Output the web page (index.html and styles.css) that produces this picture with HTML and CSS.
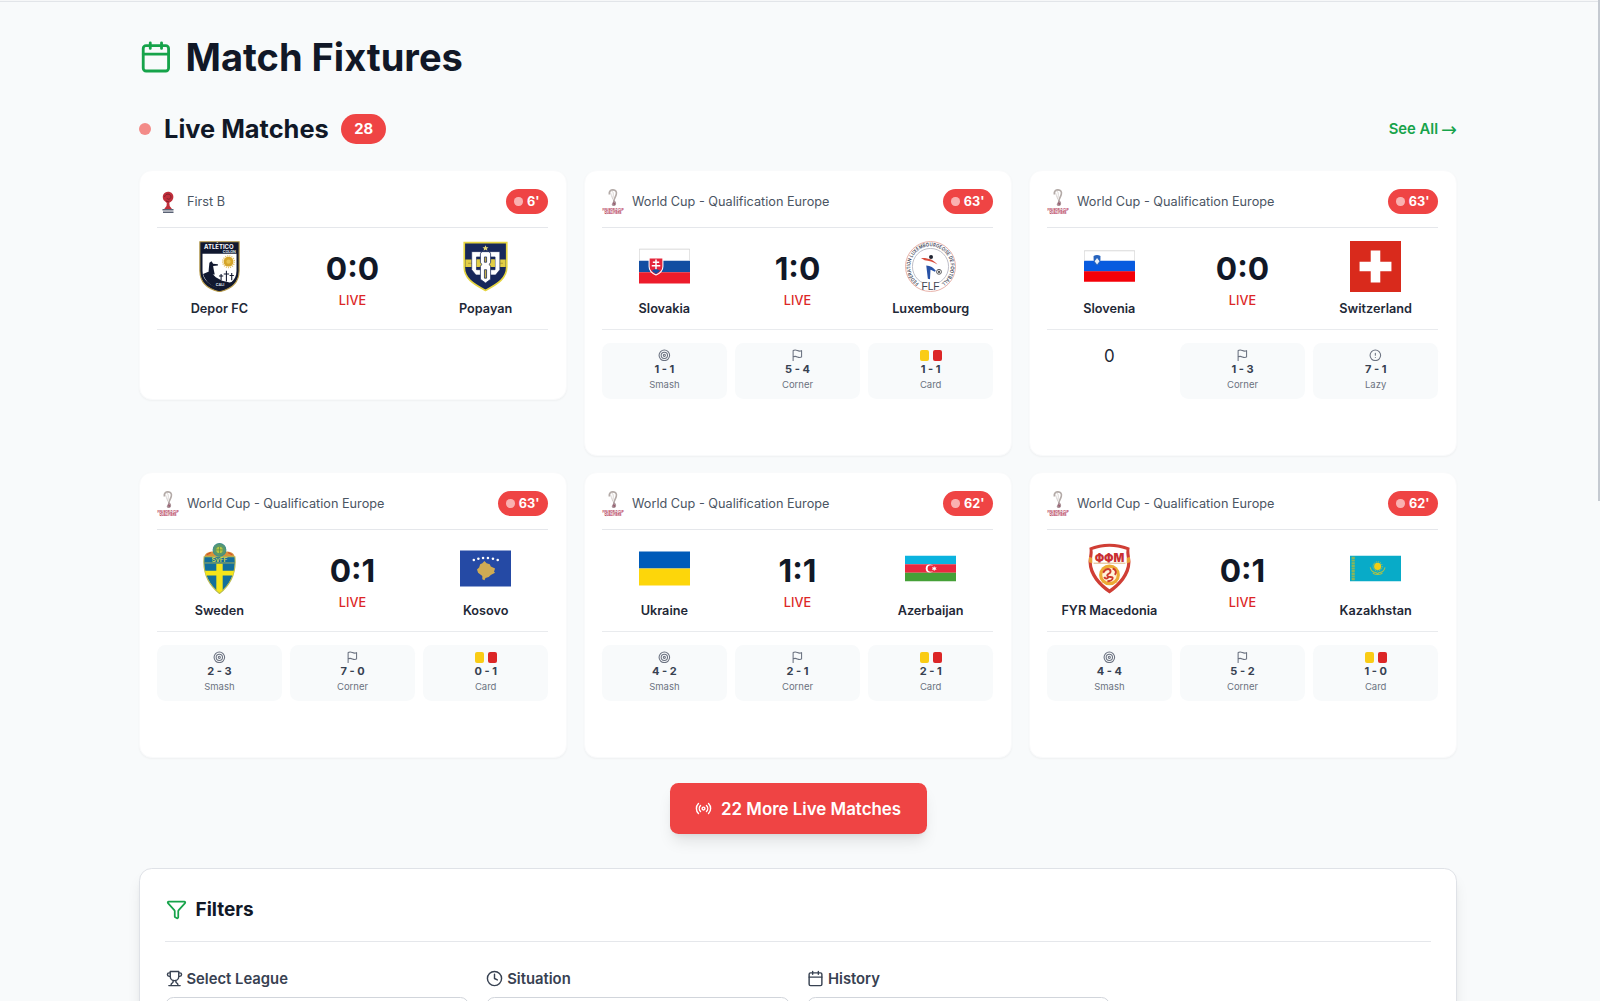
FILE: index.html
```html
<!DOCTYPE html>
<html lang="en">
<head>
<meta charset="utf-8">
<title>Match Fixtures</title>
<link rel="stylesheet" href="styles.css">
</head>
<body>
<svg class="defs" aria-hidden="true">
  <symbol id="calendar" viewBox="0 0 24 24"><path d="M8 2v4M16 2v4M3 10h18"/><rect x="3" y="4" width="18" height="18" rx="2"/></symbol>
  <symbol id="target" viewBox="0 0 24 24"><circle cx="12" cy="12" r="10"/><circle cx="12" cy="12" r="6"/><circle cx="12" cy="12" r="2"/></symbol>
  <symbol id="flag" viewBox="0 0 24 24"><path d="M4 15s1-1 4-1 5 2 8 2 4-1 4-1V3s-1 1-4 1-5-2-8-2-4 1-4 1zM4 22v-7"/></symbol>
  <symbol id="alert" viewBox="0 0 24 24"><circle cx="12" cy="12" r="10"/><path d="M12 8v4M12 16h.01"/></symbol>
  <symbol id="clock" viewBox="0 0 24 24"><circle cx="12" cy="12" r="10"/><path d="M12 6v6l4 2"/></symbol>
  <symbol id="funnel" viewBox="0 0 24 24"><path d="M10 20a1 1 0 0 0 .553.895l2 1A1 1 0 0 0 14 21v-7a2 2 0 0 1 .517-1.341L21.74 4.67A1 1 0 0 0 21 3H3a1 1 0 0 0-.742 1.67l7.225 7.989A2 2 0 0 1 10 14z"/></symbol>
  <symbol id="trophy" viewBox="0 0 24 24"><path d="M6 9H4.5a2.5 2.5 0 0 1 0-5H6M18 9h1.500a2.500 2.500 0 0 0 0-5H18M4 22h16M10 14.660V17c0 .550-.470.980-.970 1.210C7.850 18.750 7 20.240 7 22M14 14.660V17c0 .550.470.980.970 1.210C16.150 18.750 17 20.240 17 22M18 2H6v7a6 6 0 0 0 12 0V2Z"/></symbol>
  <symbol id="radio" viewBox="0 0 24 24"><path d="M4.900 19.100C1 15.200 1 8.800 4.900 4.900M7.800 16.200c-2.300-2.300-2.300-6.100 0-8.500M16.200 7.800c2.300 2.300 2.300 6.100 0 8.500M19.100 4.900C23 8.800 23 15.100 19.100 19"/><circle cx="12" cy="12" r="2"/></symbol>
  <symbol id="qualifiers" viewBox="0 0 22 26">
    <path d="M7.300 5.500C6.800 2.200 9 .8 11 .9c2.900.1 3.900 2 3.300 4.400-.6 2.500-2.300 4.200-2.500 6.700" fill="none" stroke="#b3aaa7" stroke-width="1.600"/>
    <path d="M9.400 2c2 .2 2.400 3.600 1.400 7M8.500 3.500c.3 2 1.500 4 2.300 7" fill="none" stroke="#d8d2d0"/>
    <path d="M12 11.200c1.500.7 2.300 2.100 2.100 3.700-.2 1.600-1.700 2.300-3 2.100-1.500-.3-1.800-1.900-.7-3 .9-.9.300-2 1.600-2.800z" fill="#ab9299"/>
    <path d="M11.200 14.200c1.100-.6 1.700.8.800 1.600" fill="none" stroke="#8c3a55"/>
    <text x="11" y="22" class="wc" textLength="21" lengthAdjust="spacingAndGlyphs">FIFA WORLD CUP</text>
    <text x="11" y="25" class="wc wc-sm" textLength="17" lengthAdjust="spacingAndGlyphs">QUALIFIERS</text>
  </symbol>
</svg>

<div class="topbar"></div>
<div class="scroll-thumb"></div>
<main class="page">
  <h1 class="title"><svg class="ic ic-title"><use href="#calendar"/></svg>Match Fixtures</h1>

  <div class="live-head">
    <span class="live-dot"></span>
    <h2>Live Matches</h2>
    <span class="count">28</span>
    <a class="see-all">See All <span class="arrow">→</span></a>
  </div>

  <section class="grid">
    <article class="card short">
      <header class="card-head">
        <svg class="league" viewBox="0 0 22 26"><path d="M11 2.800c3.200 0 5.400 2.200 5.400 5.200 0 2.700-1.800 4.600-4.100 5.700l.4 3.300 2.300 3H7.200l2.300-3 .3-2.900L6.500 11C4.500 6.500 7 2.800 11 2.800z" fill="#c02f3b"/><path d="M7.500 8c1-4 6-3.600 6.400-.4.200 2.500-3 3.600-4 1.600M9 12l3 1" fill="none" stroke="#7d1e2a" stroke-width=".9"/><path d="M5.500 20h11v1.600h-11zm.5 2.400h10.500v1.500H6z" fill="#596174"/></svg>
        <span class="league-name">First B</span><span class="time"><i></i>6'</span>
      </header>
      <div class="teams">
        <div class="team"><svg class="logo" viewBox="0 0 48 48">
          <path d="M5.500.7h37V28c0 12-9 17.700-18.500 19.700C14.500 45.700 5.500 40 5.500 28z" fill="#11182f" stroke="#b99b48"/>
          <path d="M8 12h32v16c0 9-7 14-16 16.500C15 42 8 37 8 28z" fill="#fff"/>
          <path d="M8.500 31l5-2 4 2 3 3 6 3.500 7 1.500 4-1c-3 3.500-7 5.500-13.500 7-7-2-13-6-15.500-14z" fill="#11182f"/>
          <path d="M14.500 20.500l2-1.500 1.500 2.500 4.500.3v1.200l-4.500.5.5 3 1 5h-6l.5-6z" fill="#11182f"/>
          <circle cx="32.500" cy="19.500" r="4.600" fill="#d5a52b"/><circle cx="32.500" cy="19.500" r="5.500" fill="none" stroke="#e4c164" stroke-width="1.300" stroke-dasharray="1 1"/><circle cx="32.500" cy="19.500" r="2" fill="#e8c350"/>
          <path d="M25.500 31v6m-2-4h4M30.500 28v10m-2.500-7h5m2.500-1v7m-2-4.500h4" stroke="#11182f"/>
          <text x="9.500" y="7.800" class="crest-atl">ATLÉTICO</text><text x="27" y="11.300" class="crest-tiny">COLON</text><text x="20.500" y="42.500" class="crest-tiny">CALI</text>
        </svg><span>Depor FC</span></div>
        <div class="score"><b>0:0</b><span>LIVE</span></div>
        <div class="team"><svg class="logo" viewBox="0 0 48 48">
          <path d="M4 1.500h40v23C44 35 36 40 24 46.500 12 40 4 35 4 24.500z" fill="#17275a" stroke="#e5d441" stroke-width="1.600"/>
          <path d="M5 17.500h38v7H5z" fill="#e2ce45"/><path d="M8 21h3m26 0h3" stroke="#866f22" stroke-dasharray="1 1"/>
          <path d="M20 10h-9v17l4 5h5v-5h-4.500V15H20zM28 10h9.500v17l-4 5H28v-5h5V15h-5z" fill="#fff" stroke="#17275a" stroke-width=".6"/>
          <path d="M15.600 17.500h4v7h-4zm12.800 0h4.400v7h-4.400z" fill="#e2ce45"/>
          <path d="M20.500 10h7l1.300 2v8l-1.200 2 1.200 2v12L24 39.500 19.200 36V24l1.200-2-1.200-2v-8z" fill="#fff" stroke="#17275a" stroke-width=".7"/><path d="M23 15h2v5h-2zm0 12h2v8h-2z" fill="#c6ae45" stroke="#17275a" stroke-width=".7"/>
          <path d="M24 4l.8 1.800 2 .1-1.500 1.300.5 2L24 8.100l-1.800 1.100.5-2-1.500-1.300 2-.1z" fill="#e6d978"/>
        </svg><span>Popayan</span></div>
      </div>
    </article>

    <article class="card">
      <header class="card-head"><svg class="league"><use href="#qualifiers"/></svg><span class="league-name">World Cup - Qualification Europe</span><span class="time"><i></i>63'</span></header>
      <div class="teams">
        <div class="team"><svg class="logo" viewBox="0 0 48 48">
          <path fill="#fff" d="M0 7.500h48v11H0z"/><path fill="#124ea2" d="M0 18.500h48v11H0z"/><path fill="#ed1c2b" d="M0 29.500h48v10.500H0z"/><path d="M.2 18.500V7.700h47.600v10.800" fill="none" stroke="#ccc" stroke-width=".7"/>
          <path d="M9.500 16h13v8c0 4-3 6.500-6.500 8-3.500-1.500-6.500-4-6.500-8z" fill="#e4253a" stroke="#fff"/><path d="M16 17.500V27m-3-7h6m-4 3.200h-3m8 0h-5" stroke="#fff" stroke-width="1.400"/><path d="M12 28c2-2 6-2 8 0l-4 3z" fill="#124ea2"/>
        </svg><span>Slovakia</span></div>
        <div class="score"><b>1:0</b><span>LIVE</span></div>
        <div class="team"><svg class="logo" viewBox="0 0 48 48">
          <circle cx="24" cy="24" r="23.500" fill="#fff" stroke="#e3a49b" stroke-width=".8"/><circle cx="24" cy="24" r="17" fill="none" stroke="#a8a9b5" stroke-width=".7"/>
          <path id="ring" d="M13.100 39.600A19 19 0 1 1 34.900 39.600" fill="none"/>
          <text class="crest-ring"><textPath href="#ring" textLength="96" lengthAdjust="spacingAndGlyphs">FÉDÉRATION LUXEMBOURGEOISE DE FOOTBALL</textPath></text>
          <circle cx="24.500" cy="15" r="1.900" fill="#202431"/><path d="M15 16c6-.5 12 1.500 15.500 6-4-2.500-8-3.500-12-4z" fill="#d94e3d"/><path d="M20 23c4 0 7 2 9 5l-1 1c-2-1-3-2-4-2l-.5 9-2-.5z" fill="#2852a6"/><circle cx="32" cy="29" r="2.300" fill="#fff" stroke="#555" stroke-width=".9"/><path d="M31 28h2v2h-2z" fill="#555"/>
          <path d="M16.500 37.500h15V46h-15z" fill="#fff"/><text x="24" y="45.800" class="crest-flf">FLF</text>
        </svg><span>Luxembourg</span></div>
      </div>
      <div class="stats">
        <div class="stat"><svg class="ic ic-stat"><use href="#target"/></svg><b>1 - 1</b><span>Smash</span></div>
        <div class="stat"><svg class="ic ic-stat"><use href="#flag"/></svg><b>5 - 4</b><span>Corner</span></div>
        <div class="stat"><div class="bookings"><i></i><i></i></div><b>1 - 1</b><span>Card</span></div>
      </div>
    </article>

    <article class="card">
      <header class="card-head"><svg class="league"><use href="#qualifiers"/></svg><span class="league-name">World Cup - Qualification Europe</span><span class="time"><i></i>63'</span></header>
      <div class="teams">
        <div class="team"><svg class="logo" viewBox="0 0 48 48">
          <path fill="#fff" d="M0 9h48v10H0z"/><path fill="#085bdf" d="M0 18.700h48v10H0z"/><path fill="#f40008" d="M0 28.400h48v10H0z"/><path d="M.2 19V9.200h47.600V19" fill="none" stroke="#ccc" stroke-width=".7"/>
          <path d="M9 14c2-1 4.500-1 6.500 0 0 5 0 7-3.200 9C9 21 9 19 9 14z" fill="#2764be"/><path d="M10 19l2.300-3 2.300 3-2.300 3z" fill="#e9eff8"/>
        </svg><span>Slovenia</span></div>
        <div class="score"><b>0:0</b><span>LIVE</span></div>
        <div class="team"><svg class="logo" viewBox="0 0 48 48"><path fill="#d92a1c" d="M0 0h48v48H0z"/><path fill="#fff" d="M19.500 9h9v10.500H39v9H28.500V39h-9V28.500H9v-9h10.500z"/></svg><span>Switzerland</span></div>
      </div>
      <div class="stats">
        <div class="zero">0</div>
        <div class="stat"><svg class="ic ic-stat"><use href="#flag"/></svg><b>1 - 3</b><span>Corner</span></div>
        <div class="stat"><svg class="ic ic-stat"><use href="#alert"/></svg><b>7 - 1</b><span>Lazy</span></div>
      </div>
    </article>

    <article class="card">
      <header class="card-head"><svg class="league"><use href="#qualifiers"/></svg><span class="league-name">World Cup - Qualification Europe</span><span class="time"><i></i>63'</span></header>
      <div class="teams">
        <div class="team"><svg class="logo" viewBox="0 0 48 48">
          <path d="M10 12c1-3 5-4 8-4h12c4 0 7 1 8 4v3H10z" fill="#d99339"/><path d="M12 11l4-2m20 2l-4-2" stroke="#cc5030"/>
          <path d="M9.500 13h29c1.500 15-5 27-14.500 34.500C14.500 40 8 28 9.500 13z" fill="#126f9c" stroke="#b9bb52"/>
          <path d="M21 19.500h6V26h10.700l-1 4.500H27v14l-3 2.500-3-2.500v-14h-9.700l-1-4.500H21z" fill="#f5e51b"/>
          <path d="M10 18.800h28" stroke="#b9bb52" stroke-width=".8"/><circle cx="24" cy="6.500" r="6" fill="#5b986c" stroke="#3f8e8b"/><circle cx="24" cy="6.500" r="3" fill="#b6c742"/><path d="M21 6.500h6M24 3.500v6" stroke="#608c41" stroke-width=".7"/>
          <text x="24" y="17.800" class="crest-svff" textLength="15" lengthAdjust="spacingAndGlyphs">SvFF</text>
        </svg><span>Sweden</span></div>
        <div class="score"><b>0:1</b><span>LIVE</span></div>
        <div class="team"><svg class="logo" viewBox="0 0 48 48"><path fill="#254aa5" d="M0 7h48v34H0z"/><path d="M23 17l2 2 3 1 1 2 4 2-1 3 1 1-4 2-2 2-3 1-1 2-2-1v-3l-4-3-1-3 2-2 1-3 2-1z" fill="#cfab54"/><g fill="#fff"><circle cx="13" cy="16" r="1.200"/><circle cx="17.300" cy="14.800" r="1.200"/><circle cx="21.700" cy="14.200" r="1.200"/><circle cx="26.300" cy="14.200" r="1.200"/><circle cx="31" cy="14.800" r="1.200"/><circle cx="35.500" cy="16" r="1.200"/></g></svg><span>Kosovo</span></div>
      </div>
      <div class="stats">
        <div class="stat"><svg class="ic ic-stat"><use href="#target"/></svg><b>2 - 3</b><span>Smash</span></div>
        <div class="stat"><svg class="ic ic-stat"><use href="#flag"/></svg><b>7 - 0</b><span>Corner</span></div>
        <div class="stat"><div class="bookings"><i></i><i></i></div><b>0 - 1</b><span>Card</span></div>
      </div>
    </article>

    <article class="card">
      <header class="card-head"><svg class="league"><use href="#qualifiers"/></svg><span class="league-name">World Cup - Qualification Europe</span><span class="time"><i></i>62'</span></header>
      <div class="teams">
        <div class="team"><svg class="logo" viewBox="0 0 48 48"><path fill="#005bb9" d="M0 8h48v16H0z"/><path fill="#fdd60a" d="M0 24h48v16H0z"/></svg><span>Ukraine</span></div>
        <div class="score"><b>1:1</b><span>LIVE</span></div>
        <div class="team"><svg class="logo" viewBox="0 0 48 48"><path fill="#0bb3df" d="M0 12h48v8H0z"/><path fill="#e9283f" d="M0 20h48v8H0z"/><path fill="#45a037" d="M0 28h48v8H0z"/><circle cx="23.200" cy="24" r="3.700" fill="#fff"/><circle cx="24.300" cy="24" r="3" fill="#e9283f"/><path d="M27.500 21.700l.6 1.500 1.600-.5-.8 1.400.8 1.300-1.600-.4-.6 1.500-.6-1.500-1.500.4.7-1.300-.7-1.400 1.500.5z" fill="#fff"/></svg><span>Azerbaijan</span></div>
      </div>
      <div class="stats">
        <div class="stat"><svg class="ic ic-stat"><use href="#target"/></svg><b>4 - 2</b><span>Smash</span></div>
        <div class="stat"><svg class="ic ic-stat"><use href="#flag"/></svg><b>2 - 1</b><span>Corner</span></div>
        <div class="stat"><div class="bookings"><i></i><i></i></div><b>2 - 1</b><span>Card</span></div>
      </div>
    </article>

    <article class="card">
      <header class="card-head"><svg class="league"><use href="#qualifiers"/></svg><span class="league-name">World Cup - Qualification Europe</span><span class="time"><i></i>62'</span></header>
      <div class="teams">
        <div class="team"><svg class="logo" viewBox="0 0 48 48">
          <path d="M5 4.500C17-.5 31-.5 43 4.500c-1 4 .5 8 .7 13C44 30 34 41 24 47.500 14 41 4 30 4.300 17.500 4.500 12.500 6 8.500 5 4.500z" fill="#d03e35"/><path d="M8 6.300c11-3.700 21-3.700 32 0-.7 4 .7 7 .7 11.700C40.500 28 32.500 37.500 24 43.500 15.500 37.500 7.500 28 7.300 18 7.300 13.300 8.700 10.300 8 6.300z" fill="#fff"/>
          <path d="M4.800 13l3 1v5l-3.300-1zm38.400 0l-3 1v5l3.300-1z" fill="#e9a13b"/><path d="M9 19h30" stroke="#d9a66a" stroke-width=".8"/>
          <text x="24" y="17.500" class="crest-ffm" textLength="28" lengthAdjust="spacingAndGlyphs">ФФМ</text>
          <circle cx="24" cy="30" r="9.800" fill="#edaa35"/><circle cx="24" cy="30" r="6.800" fill="#fff3d9"/><path d="M18 28c3-5 7-4 7-1 0 2-4 2-3 4s5 0 5 2-3 3-5 3m5-12c3 1 4 4 2 6m-10 2c1 2 3 2 4 0" fill="none" stroke="#cf3a2e" stroke-width="1.800"/>
        </svg><span>FYR Macedonia</span></div>
        <div class="score"><b>0:1</b><span>LIVE</span></div>
        <div class="team"><svg class="logo" viewBox="0 0 48 48"><path fill="#08abc8" d="M0 12h48v24H0z"/><path d="M3 13v22" stroke="#8ab65b" stroke-width="3" stroke-dasharray="2 .5"/><circle cx="26" cy="22" r="3.300" fill="#f0ce13"/><circle cx="26" cy="22" r="4.300" fill="none" stroke="#d6c934" stroke-width=".8" stroke-dasharray="1 1"/><path d="M19 23c1 4 3 4.500 6 5l1 1.500 1-1.500c3-.5 5-1 6-5m-11.500 5.500c3 1.600 6 1.600 9 0" fill="none" stroke="#a9c14a" stroke-width="1"/></svg><span>Kazakhstan</span></div>
      </div>
      <div class="stats">
        <div class="stat"><svg class="ic ic-stat"><use href="#target"/></svg><b>4 - 4</b><span>Smash</span></div>
        <div class="stat"><svg class="ic ic-stat"><use href="#flag"/></svg><b>5 - 2</b><span>Corner</span></div>
        <div class="stat"><div class="bookings"><i></i><i></i></div><b>1 - 0</b><span>Card</span></div>
      </div>
    </article>
  </section>

  <button class="more"><svg class="ic ic-more"><use href="#radio"/></svg>22 More Live Matches</button>

  <section class="filters">
    <h3><svg class="ic ic-filter"><use href="#funnel"/></svg>Filters</h3>
    <div class="fields">
      <div class="field"><span class="label"><svg class="ic ic-label"><use href="#trophy"/></svg>Select League</span><div class="input"></div></div>
      <div class="field"><span class="label"><svg class="ic ic-label"><use href="#clock"/></svg>Situation</span><div class="input"></div></div>
      <div class="field"><span class="label"><svg class="ic ic-label"><use href="#calendar"/></svg>History</span><div class="input"></div></div>
    </div>
  </section>
</main>
</body>
</html>
```
FILE: styles.css
```css
* { box-sizing: border-box; }
html { font-size: 16.9px; }
body { margin: 0; height: 1001px; overflow: hidden; background: #f8fafb; color: #111827; font-family: Inter, "Liberation Sans", sans-serif; position: relative; }
h1, h2, h3 { margin: 0; font-weight: 700; }
i { font-style: normal; }
symbol { overflow: visible; }
.defs { position: absolute; width: 0; height: 0; overflow: visible; }
.topbar { height: 2px; background: #e2e5e9; border-top: 1px solid #f6f7f8; }
.scroll-thumb { position: absolute; top: 0; right: 0; width: 2px; height: 501px; background: #c5cad1; }
.page { width: 1318px; margin: 0 0 0 139px; padding-top: 33px; }
.ic { fill: none; stroke: currentColor; stroke-width: 2; stroke-linecap: round; stroke-linejoin: round; flex: none; }

.title { display: flex; align-items: center; gap: 12.700px; height: 43px; font-size: 2.250rem; }
.ic-title { width: 33.800px; height: 33.800px; color: #16a34a; }

.live-head { display: flex; align-items: center; gap: 12.700px; height: 34px; margin-top: 34px; }
.live-head h2 { font-size: 25.400px; line-height: 34px; }
.live-dot { width: 12.400px; height: 12.400px; border-radius: 50%; background: #f38b88; }
.count { padding: 0 12.700px; border-radius: 15px; background: #ef4444; color: #fff; font-size: 14.800px; line-height: 30px; font-weight: 700; }
.see-all { display: flex; align-items: center; gap: 3px; margin-left: auto; color: #16a34a; font-size: 14.800px; line-height: 20px; font-weight: 600; }
.arrow { font-family: "DejaVu Sans", sans-serif; font-size: 19px; font-weight: 400; }

.grid { display: grid; grid-template-columns: repeat(3, 1fr); gap: 16px 17px; margin-top: 24px; align-items: start; }
.card { height: 286px; padding: 18px 18px 17px 17px; background: #fff; border: 1px solid #f9fafb; border-radius: 12.700px; box-shadow: 0 1px 2px rgba(0, 0, 0, .04); }
.card.short { height: 230px; }
.card-head { display: flex; align-items: center; height: 39px; padding-bottom: 13px; border-bottom: 1px solid #e5e7eb; }
.league { width: 22px; height: 26px; flex: none; overflow: visible; }
.league-name { margin-left: 8px; color: #4b5563; font-size: 12.700px; }
.time { display: flex; align-items: center; gap: 4.200px; height: 25.400px; margin-left: auto; padding: 0 8.500px; border-radius: 13px; background: #ef4444; color: #fff; font-size: 12.700px; font-weight: 700; }
.time i { width: 8.400px; height: 8.400px; border-radius: 50%; background: #fab1b1; }
.teams { display: grid; grid-template-columns: repeat(3, 1fr); gap: 8.500px; height: 102px; padding-top: 13px; border-bottom: 1px solid #e9ebee; }
.team, .score { display: flex; flex-direction: column; align-items: center; }
.team span { margin-top: 8px; color: #1f2937; font-size: 12.700px; line-height: 17px; font-weight: 600; white-space: nowrap; }
.logo { width: 51px; height: 51px; }
.score b { margin-top: 9px; font-size: 31.700px; line-height: 38px; }
.score span { margin-top: 3.500px; color: #dc2626; font-size: 12.700px; line-height: 17px; font-weight: 500; }
.stats { display: grid; grid-template-columns: repeat(3, 1fr); gap: 8.500px; padding-top: 12.700px; }
.stat { display: flex; flex-direction: column; align-items: center; height: 56px; padding-top: 6px; border-radius: 8.500px; background: #f8fafb; }
.ic-stat { width: 12.700px; height: 12.700px; color: #6b7280; }
.stat b { margin-top: 1px; color: #374151; font-size: 11px; line-height: 15px; }
.stat span { color: #6b7280; font-size: 9.500px; line-height: 15px; }
.bookings { display: flex; gap: 4px; height: 12.700px; align-items: center; }
.bookings i { width: 9px; height: 11px; border-radius: 2px; background: #facc15; }
.bookings i + i { background: #dc2626; }
.zero { text-align: center; font-size: 16.900px; line-height: 27px; color: #1f2937; }

.more { display: flex; align-items: center; gap: 9px; width: 257px; height: 51px; margin: 25px auto 0; padding: 0 25.500px; border: 0; border-radius: 8.500px; background: #ef4444; color: #fff; font: 600 16.900px Inter, "Liberation Sans", sans-serif; white-space: nowrap; box-shadow: 0 10px 15px -3px rgba(0, 0, 0, .1), 0 4px 6px -4px rgba(0, 0, 0, .1); }
.ic-more { width: 17px; height: 17px; }

.filters { height: 240px; margin-top: 34px; padding: 25px; background: #fff; border: 1px solid #dfe2e7; border-radius: 12.700px; box-shadow: 0 10px 15px -3px rgba(0, 0, 0, .1), 0 4px 6px -4px rgba(0, 0, 0, .1); }
.filters h3 { display: flex; align-items: center; gap: 8.500px; height: 48px; padding: 1px 0 17px 1px; border-bottom: 1px solid #e5e7eb; font-size: 19px; font-weight: 700; }
.ic-filter { width: 21px; height: 21px; color: #16a34a; }
.fields { display: grid; grid-template-columns: repeat(4, 1fr); gap: 17px; margin-top: 26px; }
.label { display: flex; align-items: center; gap: 4px; height: 21px; padding-left: .5px; color: #374151; font-size: 14.800px; font-weight: 600; }
.ic-label { width: 17px; height: 17px; }
.input { height: 44px; margin-top: 8px; border: 1px solid #d1d5db; border-radius: 8.500px; }

.wc { font-size: 3.700px; font-weight: 700; fill: #b02c4c; text-anchor: middle; }
.wc-sm { font-size: 3.200px; }
.crest-atl { font-size: 5.600px; font-weight: 700; fill: #fff; }
.crest-tiny { font-size: 3.500px; font-weight: 700; fill: #dfe2ea; }
.crest-ring { font-size: 4.800px; font-weight: 600; fill: #474b5b; }
.crest-flf { font: 9.500px "Liberation Sans", sans-serif; fill: #3f4350; text-anchor: middle; }
.crest-svff { font-size: 5.500px; font-weight: 600; fill: #d9d84a; text-anchor: middle; }
.crest-ffm { font-size: 11px; font-weight: 900; fill: #c92f32; text-anchor: middle; }
```
